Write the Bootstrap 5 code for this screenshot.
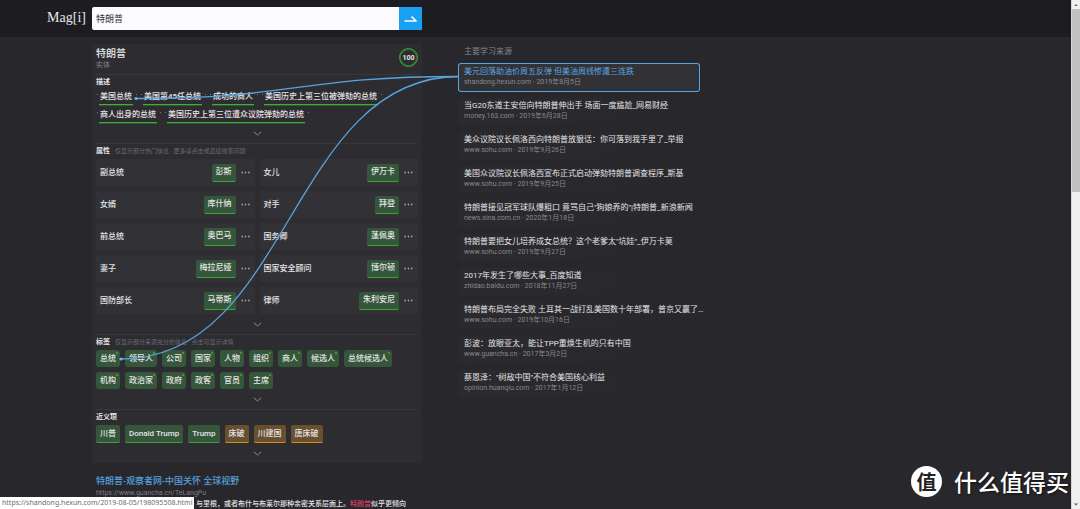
<!DOCTYPE html>
<html lang="zh-CN">
<head>
<meta charset="utf-8">
<meta name="viewport" content="width=device-width, initial-scale=1">
<title>Magi - 特朗普</title>
<link href="https://cdn.jsdelivr.net/npm/bootstrap@5.3.0/dist/css/bootstrap.min.css" rel="stylesheet">
<style>
body{background:#28272c;color:#e4e4e6;font:8px/10px Roboto,"Noto Sans CJK SC",sans-serif}
a{text-decoration:none;color:inherit}
button{font:inherit;color:inherit;border:0;padding:0;background:none}
.shell{height:100vh}
.cols{display:grid;grid-template-columns:minmax(0,92fr) minmax(0,330fr) minmax(0,37fr) minmax(0,240fr) minmax(0,372fr)}
.topbar{background:#1d1c20;padding:7px 0;height:37px}
.logo{font:14px/22px "Liberation Serif",serif;color:#e8e8ea;padding-right:6px}
.search-box{height:23px;background:#fafaff;border-radius:2px}
.search-box input{border:0;outline:0;background:none;color:#333;font-size:9px;line-height:12px;padding:0 4px}
.search-box button{width:23px;background:#18a0f2}
.panel{background:#2d2d31;border-radius:2px;padding:4px 4px 0;margin-top:7px}
.entity{font-size:10px;line-height:12px;font-weight:500;margin:0}
.kind{font-size:7px;color:#858589}
.score{width:19px;height:19px;border:1px solid #3da637;box-shadow:inset 0 0 0 1px #316f31;font-size:7px;font-weight:700}
.block{border-top:1px solid #38383c;padding-top:2px}
.block h2{font-size:7px;line-height:10px;font-weight:700;margin:0}
.head{margin-bottom:3px;gap:5px}
.hint{font-size:6px;color:#6a6a6e}
.more{height:20px;padding-top:1px;color:#8b8b90}
.facts{gap:3px 10px;padding:0 3px}
.fact{position:relative;line-height:14px;height:15px;padding:0 1px;border-bottom:1px solid #3fae39;box-shadow:0 1px 0 #2f5a30;font-weight:500;white-space:nowrap}
.fact::before,.fact::after{content:"";position:absolute;top:4px;width:1px;height:1px;background:#77777b}
.fact::before{left:-2px}
.fact::after{right:-4px}
.props{display:grid;grid-template-columns:1fr 1fr;gap:5px}
.prop{height:27px;background:#323236;border-radius:2px;padding:0 5px 0 4px;font-weight:500}
.chip{height:18px;padding:0 4px;border-radius:2px;background:#35563a;border-bottom:1px solid #3fa03a;font-weight:500;white-space:nowrap}
.chip.amber{background:#68502f;border-color:#d68a25}
.dots{width:9px;margin-left:5px;color:#98989c}
.chips{gap:5px}
.label-chip{position:relative;height:17px;padding:0 4px;border-radius:3px;background:#35563a;font-weight:500;white-space:nowrap}
.label-chip::after{content:"";position:absolute;top:2px;right:2px;width:2px;height:2px;border-radius:1px;background:#3fae39}
.result{padding:12px 4px 0}
.result h3{font-size:9px;line-height:12px;margin:0;color:#569fd8;font-weight:500}
.result cite{font-style:normal;font-size:7px;color:#7c7c80;line-height:12px}
.snippet{font-size:7px;font-weight:500;padding-left:100px;white-space:nowrap}
.snippet em{font-style:normal;color:#dc3f69}
.src-title{color:#858589;padding:10px 5px 7px}
.sources{gap:7px}
.source{height:27px;padding:3px 5px;border-radius:2px;white-space:nowrap;background:linear-gradient(90deg,#2b2a2f,#28272c)}
.source cite{font-style:normal;font-size:7px;color:#88888c}
.source.active{background:#323236;box-shadow:0 0 0 1px #58a4df}
.source.active a{color:#5aa5e0}
.links-layer{position:absolute;inset:0;width:100%;height:472px;pointer-events:none}
.status{position:absolute;left:0;bottom:0;background:#fff;color:#6c6c70;font:7px/12px "Noto Sans",sans-serif;padding:0 2px;z-index:3}
.brandmark{position:absolute;right:2px;bottom:12px;gap:12px;font:500 23px/31px "Noto Sans CJK SC",sans-serif;color:#fff;text-shadow:1px 1px 2px #111}
.seal{width:31px;height:31px;background:#fff;color:#222;font-size:20px;font-weight:700;text-shadow:none}
.rail{width:9px;background:#f0f0f0;border-left:1px solid #d8d8d8;color:#666}
.thumb{height:36%;background:#c1c1c1}
</style>
</head>
<body>
<svg class="d-none">
  <symbol id="down" viewBox="0 0 9 5"><path d="M.8.8 4.5 4 8.2.8" fill="none" stroke="currentColor"/></symbol>
  <symbol id="dots" viewBox="0 0 9 3"><g fill="currentColor"><circle cx="1.2" cy="1.5" r=".9"/><circle cx="4.5" cy="1.5" r=".9"/><circle cx="7.8" cy="1.5" r=".9"/></g></symbol>
</svg>
<div class="shell d-flex overflow-hidden position-relative">
<div class="flex-fill position-relative overflow-hidden">
  <header class="topbar cols">
    <a class="logo text-end" href="#">Mag[i]</a>
    <form class="search-box d-flex overflow-hidden">
      <input class="flex-fill" type="text" value="特朗普" aria-label="搜索">
      <button type="button" aria-label="搜索" class="d-flex align-items-center justify-content-center"><svg width="13" height="8" viewBox="0 0 13 8"><path d="M.5 6H12L7.5 1.5" fill="none" stroke="#fff" stroke-width="1.7" stroke-linejoin="round"/></svg></button>
    </form>
  </header>
  <main class="cols position-relative">
    <span></span>
    <div>
      <section class="panel">
        <div class="d-flex justify-content-between pb-1">
          <div><h1 class="entity">特朗普</h1><div class="kind">实体</div></div>
          <div class="score rounded-circle d-flex align-items-center justify-content-center">100</div>
        </div>
        <div class="block">
          <div class="head d-flex"><h2>描述</h2></div>
          <div class="facts d-flex flex-wrap">
            <button class="fact">美国总统</button><button class="fact">美国第45任总统</button><button class="fact">成功的商人</button><button class="fact">美国历史上第三位被弹劾的总统</button><button class="fact">商人出身的总统</button><button class="fact">美国历史上第三位遭众议院弹劾的总统</button>
          </div>
          <button class="more w-100 d-flex align-items-center justify-content-center" aria-label="展开"><svg width="9" height="5"><use href="#down"/></svg></button>
        </div>
        <div class="block">
          <div class="head d-flex"><h2>属性</h2><span class="hint">仅显示部分热门信息 · 更多请点击或直接搜索问题</span></div>
          <div class="props">
            <div class="prop d-flex align-items-center"><span class="me-auto">副总统</span><button class="chip">彭斯</button><button class="dots d-flex" aria-label="更多"><svg width="9" height="3"><use href="#dots"/></svg></button></div>
            <div class="prop d-flex align-items-center"><span class="me-auto">女儿</span><button class="chip">伊万卡</button><button class="dots d-flex" aria-label="更多"><svg width="9" height="3"><use href="#dots"/></svg></button></div>
            <div class="prop d-flex align-items-center"><span class="me-auto">女婿</span><button class="chip">库什纳</button><button class="dots d-flex" aria-label="更多"><svg width="9" height="3"><use href="#dots"/></svg></button></div>
            <div class="prop d-flex align-items-center"><span class="me-auto">对手</span><button class="chip">拜登</button><button class="dots d-flex" aria-label="更多"><svg width="9" height="3"><use href="#dots"/></svg></button></div>
            <div class="prop d-flex align-items-center"><span class="me-auto">前总统</span><button class="chip">奥巴马</button><button class="dots d-flex" aria-label="更多"><svg width="9" height="3"><use href="#dots"/></svg></button></div>
            <div class="prop d-flex align-items-center"><span class="me-auto">国务卿</span><button class="chip">蓬佩奥</button><button class="dots d-flex" aria-label="更多"><svg width="9" height="3"><use href="#dots"/></svg></button></div>
            <div class="prop d-flex align-items-center"><span class="me-auto">妻子</span><button class="chip">梅拉尼娅</button><button class="dots d-flex" aria-label="更多"><svg width="9" height="3"><use href="#dots"/></svg></button></div>
            <div class="prop d-flex align-items-center"><span class="me-auto">国家安全顾问</span><button class="chip">博尔顿</button><button class="dots d-flex" aria-label="更多"><svg width="9" height="3"><use href="#dots"/></svg></button></div>
            <div class="prop d-flex align-items-center"><span class="me-auto">国防部长</span><button class="chip">马蒂斯</button><button class="dots d-flex" aria-label="更多"><svg width="9" height="3"><use href="#dots"/></svg></button></div>
            <div class="prop d-flex align-items-center"><span class="me-auto">律师</span><button class="chip">朱利安尼</button><button class="dots d-flex" aria-label="更多"><svg width="9" height="3"><use href="#dots"/></svg></button></div>
          </div>
          <button class="more w-100 d-flex align-items-center justify-content-center" aria-label="展开"><svg width="9" height="5"><use href="#down"/></svg></button>
        </div>
        <div class="block">
          <div class="head d-flex"><h2>标签</h2><span class="hint">仅显示部分来源充分的信息 · 点击可显示详情</span></div>
          <div class="chips d-flex flex-wrap">
            <button class="label-chip">总统</button><button class="label-chip">领导人</button><button class="label-chip">公司</button><button class="label-chip">国家</button><button class="label-chip">人物</button><button class="label-chip">组织</button><button class="label-chip">商人</button><button class="label-chip">候选人</button><button class="label-chip">总统候选人</button><button class="label-chip">机构</button><button class="label-chip">政治家</button><button class="label-chip">政府</button><button class="label-chip">政客</button><button class="label-chip">官员</button><button class="label-chip">主席</button>
          </div>
          <button class="more w-100 d-flex align-items-center justify-content-center" aria-label="展开"><svg width="9" height="5"><use href="#down"/></svg></button>
        </div>
        <div class="block">
          <div class="head d-flex"><h2>近义项</h2></div>
          <div class="chips d-flex flex-wrap">
            <button class="chip">川普</button><button class="chip">Donald Trump</button><button class="chip">Trump</button><button class="chip amber">床破</button><button class="chip amber">川建国</button><button class="chip amber">唐床破</button>
          </div>
          <button class="more w-100 d-flex align-items-center justify-content-center" aria-label="展开"><svg width="9" height="5"><use href="#down"/></svg></button>
        </div>
      </section>
      <article class="result">
        <h3><a href="#">特朗普-观察者网-中国关怀 全球视野</a></h3>
        <cite class="d-block">https://www.guancha.cn/TeLangPu</cite>
        <div class="snippet">与里根，或者布什与布莱尔那种亲密关系层面上。<em>特朗普</em>似乎更倾向</div>
      </article>
    </div>
    <span></span>
    <aside>
      <div class="src-title">主要学习来源</div>
      <div class="sources d-flex flex-column">
        <div class="source active"><a class="d-block" href="#">美元回落助油价周五反弹 但美油周线惨遭三连跌</a><cite class="d-block">shandong.hexun.com · 2019年8月5日</cite></div>
        <div class="source"><a class="d-block" href="#">当G20东道主安倍向特朗普伸出手 场面一度尴尬_网易财经</a><cite class="d-block">money.163.com · 2019年6月28日</cite></div>
        <div class="source"><a class="d-block" href="#">美众议院议长佩洛西向特朗普放狠话：你可落到我手里了_举报</a><cite class="d-block">www.sohu.com · 2019年9月26日</cite></div>
        <div class="source"><a class="d-block" href="#">美国众议院议长佩洛西宣布正式启动弹劾特朗普调查程序_斯基</a><cite class="d-block">www.sohu.com · 2019年9月25日</cite></div>
        <div class="source"><a class="d-block" href="#">特朗普接见冠军球队爆粗口 竟骂自己"狗娘养的"|特朗普_新浪新闻</a><cite class="d-block">news.sina.com.cn · 2020年1月18日</cite></div>
        <div class="source"><a class="d-block" href="#">特朗普要把女儿培养成女总统？这个老爹太"坑娃"_伊万卡莫</a><cite class="d-block">www.sohu.com · 2019年9月27日</cite></div>
        <div class="source"><a class="d-block" href="#">2017年发生了哪些大事_百度知道</a><cite class="d-block">zhidao.baidu.com · 2018年11月27日</cite></div>
        <div class="source"><a class="d-block" href="#">特朗普布局完全失败 土耳其一战打乱美国数十年部署，普京又赢了…</a><cite class="d-block">www.sohu.com · 2019年10月16日</cite></div>
        <div class="source"><a class="d-block" href="#">彭波：放眼亚太，能让TPP重焕生机的只有中国</a><cite class="d-block">www.guancha.cn · 2017年3月2日</cite></div>
        <div class="source"><a class="d-block" href="#">蔡恩泽："树敌中国"不符合美国核心利益</a><cite class="d-block">opinion.huanqiu.com · 2017年1月12日</cite></div>
      </div>
    </aside>
    <svg class="links-layer" viewBox="0 37 1071 472" preserveAspectRatio="none">
      <g fill="none" stroke="#58a4df" stroke-width="1.3"><path d="M136 98.5C298 98.5 298 76.5 459 76.5"/><path d="M121 359C290 359 290 76.5 459 76.5"/></g>
      <g fill="#6ab4ee"><circle cx="136" cy="98.5" r="1.6"/><circle cx="121" cy="359" r="1.6"/></g>
    </svg>
  </main>
  <div class="brandmark d-flex align-items-center"><span class="seal rounded-circle d-flex align-items-center justify-content-center">值</span><span>什么值得买</span></div>
</div>
<div class="rail d-flex flex-column">
  <svg width="8" height="9" viewBox="0 0 8 9"><path d="M2 6 4 4 6 6z" fill="#777"/></svg>
  <div class="thumb"></div>
  <svg class="mt-auto" width="8" height="9" viewBox="0 0 8 9"><path d="M2 3.5 4 5.5 6 3.5z" fill="#555"/></svg>
</div>
<div class="status">https://shandong.hexun.com/2019-08-05/198095508.html</div>
</div>
<script src="https://cdn.jsdelivr.net/npm/bootstrap@5.3.0/dist/js/bootstrap.bundle.min.js"></script>
</body>
</html>
